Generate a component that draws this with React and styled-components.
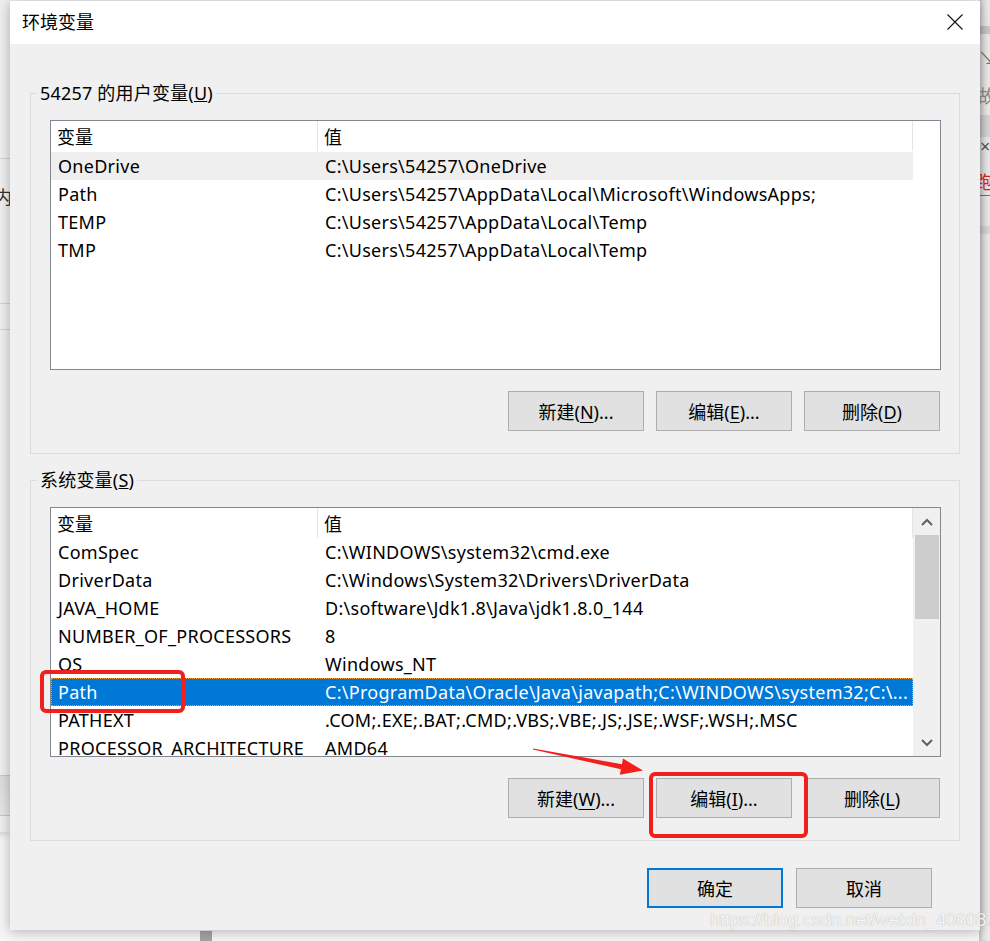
import React from 'react'
import styled, { createGlobalStyle } from 'styled-components'

const Global = createGlobalStyle`
  html, body {
    margin: 0;
    padding: 0;
  }
  body {
    width: 990px;
    height: 941px;
    overflow: hidden;
    font-family: "Noto Sans", "Noto Sans CJK SC", sans-serif;
    color: #000;
  }
`

const Desktop = styled.div`
  position: relative;
  width: 990px;
  height: 941px;
  overflow: hidden;
  background: #f6f6f6;
`

/* windows sitting behind the dialog */
const LeftWindow = styled.div`
  position: absolute;
  left: -200px;
  top: 0;
  width: 210px;
  height: 832px;
  background:
    linear-gradient(#d2d2d2, #d2d2d2) 0 158px / 100% 1px no-repeat,
    linear-gradient(#d2d2d2, #d2d2d2) 0 303px / 100% 1px no-repeat,
    linear-gradient(#d2d2d2, #d2d2d2) 0 329px / 100% 1px no-repeat,
    linear-gradient(#c8c8c8, #c8c8c8) 0 775px / 100% 1px no-repeat,
    linear-gradient(#dcdcdc, #e8e8e8) 0 776px / 100% 39px no-repeat,
    linear-gradient(#c8c8c8, #c8c8c8) 0 815px / 100% 1px no-repeat,
    #f0f0f0;
  box-shadow: 0 2px 6px rgba(0, 0, 0, 0.15);
`

const LeftGlyph = styled.span`
  position: absolute;
  left: 194px;
  top: 183px;
  font-size: 18px;
  color: #333;
`

const RightWindow = styled.div`
  position: absolute;
  left: 979px;
  top: 0;
  width: 40px;
  height: 941px;
  background:
    linear-gradient(#c9c9c9, #c9c9c9) 0 26px / 100% 8px no-repeat,
    linear-gradient(#d6d6d6, #d6d6d6) 0 115px / 100% 22px no-repeat,
    linear-gradient(#3b82c4, #3b82c4) 0 195px / 100% 1px no-repeat,
    linear-gradient(#d9d9d9, #d9d9d9) 0 226px / 100% 8px no-repeat,
    #ebebeb;
  box-shadow: inset 6px 0 6px -4px rgba(0, 0, 0, 0.25);
`

const RightGlyph = styled.span`
  position: absolute;
  left: ${p => p.$x}px;
  top: ${p => p.$y}px;
  font-size: 18px;
  color: ${p => p.$color || '#8a8a8a'};
`

const BottomBlock = styled.div`
  position: absolute;
  left: 200px;
  top: 931px;
  width: 12px;
  height: 10px;
  background: #a4a4a4;
`

/* the dialog */
const Dialog = styled.section`
  position: absolute;
  left: 10px;
  top: 1px;
  width: 970px;
  height: 929px;
  display: flex;
  flex-direction: column;
  background: #f0f0f0;
  box-shadow: 0 1px 12px rgba(0, 0, 0, 0.3);
`

const TitleBar = styled.header`
  height: 43px;
  flex: none;
  display: flex;
  align-items: center;
  justify-content: space-between;
  padding-left: 12px;
  background: #fff;
  font-size: 18px;
  line-height: 24px;
  padding-bottom: 1px;
  box-sizing: border-box;
`

const CloseButton = styled.button`
  width: 50px;
  height: 42px;
  padding: 0;
  border: 0;
  background: transparent;
  display: flex;
  align-items: center;
  justify-content: center;
`

const Body = styled.div`
  flex: 1;
  display: flex;
  flex-direction: column;
  padding: 37px 20px 0;
`

const Group = styled.fieldset`
  margin: 0 0 ${p => p.$gap || 0}px;
  padding: 15px 18px 22px 19px;
  border: 1px solid #dcdcdc;
  min-width: 0;
`

const Legend = styled.legend`
  margin-left: -13px;
  padding: 0 3px;
  font-size: 18px;
  line-height: 24px;
  letter-spacing: 0.2px;
`

const List = styled.div`
  height: 250px;
  box-sizing: border-box;
  border: 1px solid #828790;
  background: #fff;
  display: flex;
  overflow: hidden;
`

const Table = styled.div`
  width: 862px;
  flex: none;
  display: flex;
  flex-direction: column;
`

const HeaderRow = styled.div`
  height: 31px;
  display: grid;
  grid-template-columns: 267px 595px;
`

const HeaderCell = styled.div`
  height: 30px;
  display: flex;
  align-items: center;
  padding-left: 6px;
  border-right: 1px solid #e5e5e5;
  font-size: 18px;
`

const Row = styled.div`
  height: 28px;
  box-sizing: border-box;
  display: grid;
  grid-template-columns: 267px 595px;
  align-items: center;
  font-size: 18px;
  letter-spacing: 0.28px;
  background: ${p => (p.$state === 'selected' ? '#0078d7' : p.$state === 'hover' ? '#efefef' : 'transparent')};
  color: ${p => (p.$state === 'selected' ? '#fff' : '#000')};
  outline: ${p => (p.$state === 'selected' ? '1px dotted #f2a23c' : 'none')};
  outline-offset: -1px;
`

const Cell = styled.div`
  padding-left: 7px;
  white-space: nowrap;
  overflow: hidden;
  line-height: 28px;
`

const Scrollbar = styled.div`
  flex: 1;
  display: flex;
  flex-direction: column;
  align-items: center;
  background: #f0f0f0;
`

const ScrollArrow = styled.div`
  height: 27px;
  width: 100%;
  display: flex;
  align-items: center;
  justify-content: center;
`

const Thumb = styled.div`
  width: 24px;
  height: 84px;
  background: #cdcdcd;
`

const Track = styled.div`
  flex: 1;
`

const ButtonRow = styled.div`
  margin-top: 21px;
  padding-right: 1px;
  display: flex;
  justify-content: flex-end;
  gap: 12px;
`

const Button = styled.button`
  width: 136px;
  height: 40px;
  box-sizing: border-box;
  padding: 0;
  border: ${p => (p.$default ? '2px solid #0078d7' : '1px solid #adadad')};
  background: #e1e1e1;
  font-family: inherit;
  font-size: 18px;
  color: #000;
  u {
    text-underline-offset: 3px;
  }
`

const Footer = styled.div`
  margin-top: 27px;
  margin-right: 28px;
  display: flex;
  justify-content: flex-end;
  gap: 13px;
`

/* red markup drawn over the dialog */
const Markup = styled.svg`
  position: absolute;
  left: 0;
  top: 0;
  pointer-events: none;
`

const Watermark = styled.div`
  position: absolute;
  left: 710px;
  top: 910px;
  font-family: "Liberation Sans", Arial, sans-serif;
  font-size: 18px;
  color: rgba(255, 255, 255, 0.92);
  text-shadow: 0 0 1px rgba(0, 0, 0, 0.35);
  white-space: nowrap;
`

const userVars = [
  ['OneDrive', 'C:\\Users\\54257\\OneDrive'],
  ['Path', 'C:\\Users\\54257\\AppData\\Local\\Microsoft\\WindowsApps;'],
  ['TEMP', 'C:\\Users\\54257\\AppData\\Local\\Temp'],
  ['TMP', 'C:\\Users\\54257\\AppData\\Local\\Temp'],
]

const systemVars = [
  ['ComSpec', 'C:\\WINDOWS\\system32\\cmd.exe'],
  ['DriverData', 'C:\\Windows\\System32\\Drivers\\DriverData'],
  ['JAVA_HOME', 'D:\\software\\Jdk1.8\\Java\\jdk1.8.0_144'],
  ['NUMBER_OF_PROCESSORS', '8'],
  ['OS', 'Windows_NT'],
  ['Path', 'C:\\ProgramData\\Oracle\\Java\\javapath;C:\\WINDOWS\\system32;C:\\...'],
  ['PATHEXT', '.COM;.EXE;.BAT;.CMD;.VBS;.VBE;.JS;.JSE;.WSF;.WSH;.MSC'],
  ['PROCESSOR_ARCHITECTURE', 'AMD64'],
]

const Chevron = ({ up }) => (
  <svg width="12" height="8" viewBox="0 0 12 8">
    <polyline
      points={up ? '1,7 6,2 11,7' : '1,1 6,6 11,1'}
      fill="none"
      stroke="#606060"
      strokeWidth="2"
    />
  </svg>
)

const VarList = ({ rows, selected, hover, scroll }) => (
  <List>
    <Table>
      <HeaderRow>
        <HeaderCell>变量</HeaderCell>
        <HeaderCell>值</HeaderCell>
      </HeaderRow>
      {rows.map(([name, value], i) => (
        <Row key={name + i} $state={i === selected ? 'selected' : i === hover ? 'hover' : ''}>
          <Cell>{name}</Cell>
          <Cell>{value}</Cell>
        </Row>
      ))}
    </Table>
    {scroll ? (
      <Scrollbar>
        <ScrollArrow><Chevron up /></ScrollArrow>
        <Thumb />
        <Track />
        <ScrollArrow><Chevron /></ScrollArrow>
      </Scrollbar>
    ) : null}
  </List>
)

const Label = ({ text, keyChar, tail = '' }) => (
  <>
    {text}(<u>{keyChar}</u>){tail}
  </>
)

export default function App() {
  return (
    <Desktop>
      <Global />
      <LeftWindow>
        <LeftGlyph>内</LeftGlyph>
      </LeftWindow>
      <RightWindow>
        <RightGlyph $x={-1} $y={44} $color="#777">↘</RightGlyph>
        <RightGlyph $x={-1} $y={82}>故</RightGlyph>
        <RightGlyph $x={1} $y={134} $color="#555">×</RightGlyph>
        <RightGlyph $x={-4} $y={168} $color="#e02020">跑</RightGlyph>
      </RightWindow>
      <BottomBlock />

      <Dialog>
        <TitleBar>
          环境变量
          <CloseButton aria-label="关闭">
            <svg width="16" height="16" viewBox="0 0 16 16">
              <path d="M0.5 0.5 L15.5 15.5 M15.5 0.5 L0.5 15.5" stroke="#111" strokeWidth="1.1" />
            </svg>
          </CloseButton>
        </TitleBar>

        <Body>
          <Group $gap={14}>
            <Legend><Label text="54257 的用户变量" keyChar="U" /></Legend>
            <VarList rows={userVars} hover={0} />
            <ButtonRow>
              <Button><Label text="新建" keyChar="N" tail="..." /></Button>
              <Button><Label text="编辑" keyChar="E" tail="..." /></Button>
              <Button><Label text="删除" keyChar="D" /></Button>
            </ButtonRow>
          </Group>

          <Group>
            <Legend><Label text="系统变量" keyChar="S" /></Legend>
            <VarList rows={systemVars} selected={5} scroll />
            <ButtonRow>
              <Button><Label text="新建" keyChar="W" tail="..." /></Button>
              <Button><Label text="编辑" keyChar="I" tail="..." /></Button>
              <Button><Label text="删除" keyChar="L" /></Button>
            </ButtonRow>
          </Group>

          <Footer>
            <Button $default>确定</Button>
            <Button>取消</Button>
          </Footer>
        </Body>
      </Dialog>

      <Markup width="990" height="941" viewBox="0 0 990 941">
        <rect x="42" y="672" width="141" height="39" rx="4" fill="none" stroke="#f2201c" strokeWidth="4" />
        <rect x="651" y="774" width="155" height="62" rx="4" fill="none" stroke="#f2201c" strokeWidth="4" />
        <polygon
          fill="#f2201c"
          points="533.1,748.4 621.9,764.2 623,758.6 643,770.5 619.8,774.8 620.9,769.2 532.9,749.6"
        />
      </Markup>
      <Watermark>https://blog.csdn.net/weixin_40608713</Watermark>
    </Desktop>
  )
}
